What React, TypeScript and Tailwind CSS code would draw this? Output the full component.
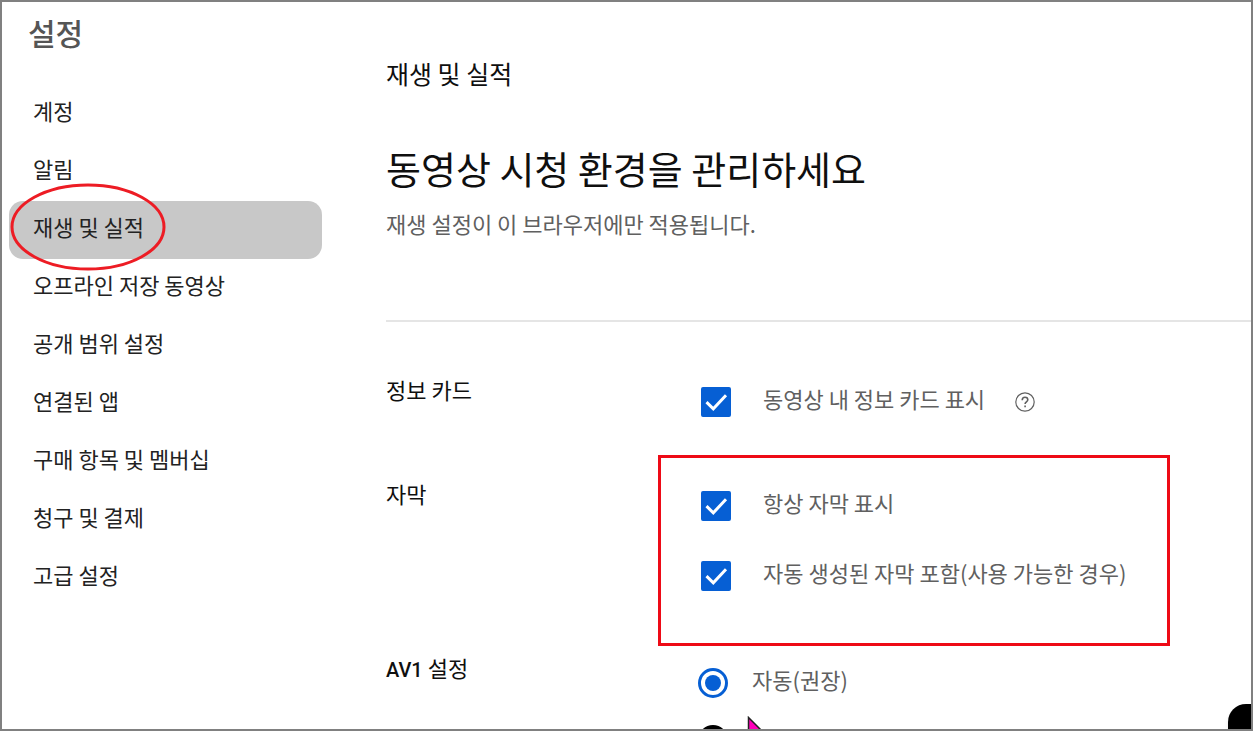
import React, { useState } from "react";

const navItems = [
  "계정",
  "알림",
  "재생 및 실적",
  "오프라인 저장 동영상",
  "공개 범위 설정",
  "연결된 앱",
  "구매 항목 및 멤버십",
  "청구 및 결제",
  "고급 설정",
];

interface CheckOptionProps {
  label: string;
  children?: React.ReactNode;
}

const CheckOption: React.FC<CheckOptionProps> = ({ label, children }) => {
  const [checked, setChecked] = useState(true);

  return (
    <div className="flex h-8 items-center gap-[30px]">
      <label className="flex h-8 cursor-pointer gap-8">
        <span className="grid w-[30px] place-items-center">
          <input
            type="checkbox"
            checked={checked}
            onChange={(e) => setChecked(e.target.checked)}
            className="col-start-1 row-start-1 h-[30px] w-[30px] appearance-none rounded-xs border-2 border-[#606060] checked:border-[#065fd4] checked:bg-[#065fd4]"
          />
          {checked && (
            <svg
              viewBox="0 0 30 30"
              className="pointer-events-none col-start-1 row-start-1 h-[30px] w-[30px]"
              fill="none"
              stroke="#fff"
              strokeWidth="3"
            >
              <path d="M5.5 15.2 12.3 21.8 25 8.3" />
            </svg>
          )}
        </span>
        <span className="leading-6 text-[#606060]">{label}</span>
      </label>
      {children}
    </div>
  );
};

interface SectionProps {
  title: React.ReactNode;
  children: React.ReactNode;
}

const Section: React.FC<SectionProps> = ({ title, children }) => (
  <section className="flex">
    <h3 className="w-[315px] shrink-0 leading-8">{title}</h3>
    {children}
  </section>
);

const App: React.FC = () => {
  const [active, setActive] = useState("재생 및 실적");
  const [codec, setCodec] = useState("auto");

  return (
    <div className="relative flex h-screen overflow-hidden border-2 border-[#808080] bg-white font-['Noto_Sans_CJK_KR',sans-serif] text-[22px] whitespace-nowrap text-[#0f0f0f]">
      <aside className="w-[384px] shrink-0 pt-[10px]">
        <h1 className="pl-[26px] text-[30px] leading-10 font-medium text-[#555]">
          설정
        </h1>
        <nav className="mt-[33px] mr-16 ml-[7px]">
          {navItems.map((item) => (
            <div key={item} className="relative">
              <a
                href="#"
                onClick={(e) => {
                  e.preventDefault();
                  setActive(item);
                }}
                className={`flex h-[58px] items-center rounded-[14px] pb-2 pl-6 text-[#222] ${
                  active === item ? "bg-[#c8c8c8]" : ""
                }`}
              >
                {item}
              </a>
              {/* 강조 타원 */}
              {item === "재생 및 실적" && (
                <svg
                  viewBox="0 0 156 88"
                  className="pointer-events-none absolute -top-[18px] left-[1px] z-10 h-[88px] w-[156px]"
                  fill="none"
                  stroke="#ed1c24"
                  strokeWidth="3"
                >
                  <ellipse cx="78" cy="44" rx="76" ry="42" />
                </svg>
              )}
            </div>
          ))}
        </nav>
      </aside>

      <main className="min-w-0 flex-1 pt-[53px]">
        <p className="text-[25px] leading-9">재생 및 실적</p>
        <h2 className="mt-[49px] text-[38px] leading-[56px]">
          동영상 시청 환경을 관리하세요
        </h2>
        <p className="mt-[11px] leading-8 text-[#606060]">
          재생 설정이 이 브라우저에만 적용됩니다.
        </p>
        <hr className="mt-[81px] border-t-2 border-[#e5e5e5]" />

        <div className="mt-[51px] flex flex-col gap-[59px]">
          <Section title="정보 카드">
            <div className="pt-[13px]">
              <CheckOption label="동영상 내 정보 카드 표시">
                <button type="button" aria-label="도움말">
                  <svg viewBox="0 0 20 20" className="h-5 w-5" fill="none" stroke="#606060">
                    <circle cx="10" cy="10" r="9.2" strokeWidth="1.2" />
                    <path
                      d="M7.2 8.2c0-1.8 1.1-3 2.8-3s2.8 1.1 2.8 2.6c0 2-2.7 2.1-2.7 4.2"
                      strokeWidth="1.6"
                    />
                    <path d="M10.1 13.6v1.6" strokeWidth="1.6" />
                  </svg>
                </button>
              </CheckOption>
            </div>
          </Section>

          <Section title="자막">
            <div className="relative flex flex-col gap-[38px] pt-[13px]">
              <CheckOption label="항상 자막 표시" />
              <CheckOption label="자동 생성된 자막 포함(사용 가능한 경우)" />
              {/* 강조 사각형 */}
              <div className="pointer-events-none absolute -top-[22px] -right-[44px] -bottom-[54px] -left-[43px] border-3 border-[#ee0a16]" />
            </div>
          </Section>

          <Section
            title={
              <>
                <span className="font-['Roboto',sans-serif] text-[20px] font-medium">
                  AV1
                </span>{" "}
                설정
              </>
            }
          >
            <div className="-ml-[3px] flex flex-col gap-[26px] pt-4">
              <label className="flex h-8 cursor-pointer gap-6">
                <input
                  type="radio"
                  name="codec"
                  checked={codec === "auto"}
                  onChange={() => setCodec("auto")}
                  className="mt-px h-[30px] w-[30px] appearance-none rounded-full border-3 border-black bg-clip-content p-[4px] checked:border-[#065fd4] checked:bg-[#065fd4]"
                />
                <span className="leading-6 text-[#606060]">자동(권장)</span>
              </label>
              <input
                type="radio"
                name="codec"
                aria-label="SD에 AV1 사용"
                checked={codec === "sd"}
                onChange={() => setCodec("sd")}
                className="h-[30px] w-[30px] shrink-0 appearance-none rounded-full border-4 border-black bg-clip-content p-[4px] checked:border-[#065fd4] checked:bg-[#065fd4]"
              />
            </div>
          </Section>
        </div>
      </main>

      {/* 마우스 커서 */}
      <svg
        viewBox="0 0 24 32"
        className="pointer-events-none absolute top-[714px] left-[745px] h-8 w-6"
        fill="#f0b"
        stroke="#222"
        strokeWidth="1.5"
      >
        <path d="M1.500 1.500v27l7-7h13z" />
      </svg>
      <div className="absolute right-0 bottom-0 h-[25px] w-[23px] rounded-tl-[18px] bg-black shadow-md" />
    </div>
  );
};

export default App;
